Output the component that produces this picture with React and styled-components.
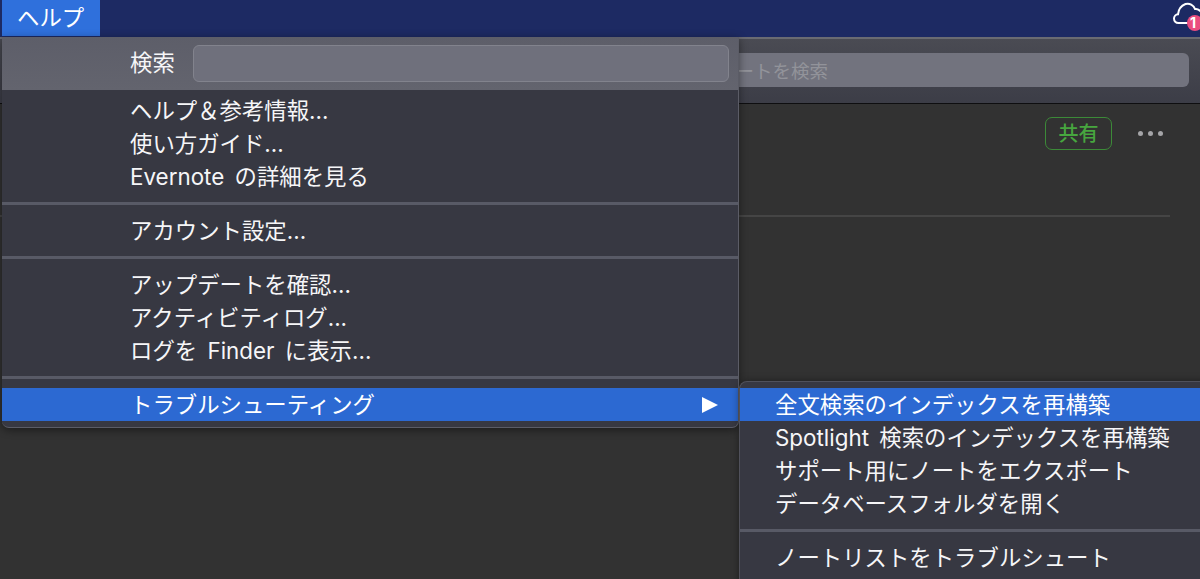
import styled, { createGlobalStyle } from "styled-components";

const GlobalStyle = createGlobalStyle`
  html, body {
    margin: 0;
    padding: 0;
    background: #323232;
  }
  * {
    box-sizing: border-box;
  }
`;

const Page = styled.div`
  position: relative;
  width: 1200px;
  height: 579px;
  overflow: hidden;
  display: flex;
  flex-direction: column;
  background: #323232;
  color: #f6f6f8;
  font-family: Inter, "Noto Sans CJK JP", sans-serif;
  font-size: 22.4px;
  word-spacing: 4px;
`;

const MenuBar = styled.div`
  height: 37px;
  flex: none;
  display: flex;
  align-items: flex-start;
  justify-content: space-between;
  padding-left: 2px;
  background: #1d2a63;
`;

const MenuTitle = styled.div`
  width: 98px;
  height: 36px;
  display: flex;
  align-items: center;
  padding: 0 0 4px 15px;
  background: #2f70dc;
  color: #fff;
`;

const CloudWrap = styled.div`
  position: relative;
  width: 28px;
  height: 32px;
`;

const Badge = styled.span`
  position: absolute;
  left: 15px;
  top: 15px;
  width: 16px;
  height: 16px;
  border-radius: 50%;
  background: #ea4c7f;
  color: #fff;
  font-size: 14px;
  font-weight: 700;
  line-height: 16px;
  padding-left: 3px;
`;

const Toolbar = styled.div`
  height: 67px;
  flex: none;
  display: flex;
  justify-content: flex-end;
  align-items: flex-start;
  padding: 14px 11px 0 0;
  background: linear-gradient(#4a4b53, #3c3d47);
  border-top: 2px solid #6a6b72;
  border-bottom: 1px solid #0e0e10;
`;

const NoteSearch = styled.div`
  width: 500px;
  height: 34px;
  display: flex;
  align-items: center;
  padding: 0 0 1px 28px;
  border-radius: 6px;
  background: #72737e;
  color: #92939a;
  font-size: 18.5px;
`;

const Content = styled.div`
  flex: 1;
  padding: 13px 30px 0 0;
`;

const ActionRow = styled.div`
  display: flex;
  justify-content: flex-end;
  align-items: center;
  gap: 26px;
  padding-right: 7px;
`;

const ShareButton = styled.div`
  width: 67px;
  height: 33px;
  display: flex;
  align-items: center;
  justify-content: center;
  padding-bottom: 3px;
  border: 1px solid #3c8a38;
  border-radius: 7px;
  color: #47a63f;
  font-size: 20px;
  font-weight: 500;
`;

const Dots = styled.div`
  display: flex;
  gap: 5px;
`;

const Dot = styled.span`
  width: 5px;
  height: 5px;
  border-radius: 50%;
  background: #a5a5a8;
`;

const Rule = styled.div`
  height: 2px;
  margin-top: 65px;
  background: #454545;
`;

const Menu = styled.div`
  position: absolute;
  left: 2px;
  top: 37px;
  width: 737px;
  padding-bottom: 6px;
  background: #373842;
  border-right: 1px solid #5b5c66;
  border-bottom: 1px solid #5b5c66;
  border-radius: 0 0 7px 7px;
  box-shadow: 0 2px 8px rgba(0, 0, 0, 0.45);
`;

const SearchHeader = styled.div`
  height: 53px;
  margin-bottom: 4px;
  display: flex;
  align-items: center;
  gap: 18px;
  padding: 0 9px 0 128px;
  background: linear-gradient(#5d5e69, #63646e);
`;

const SearchLabel = styled.span`
  margin-top: -5px;
`;

const SearchInput = styled.div`
  flex: 1;
  height: 37px;
  margin-top: -1px;
  background: #6f707c;
  border: 1px solid #82838d;
  border-radius: 6px;
`;

const Item = styled.div`
  height: 33px;
  display: flex;
  align-items: center;
  justify-content: space-between;
  padding: 0 20px 4px ${(p) => p.$indent}px;
  white-space: nowrap;
  background: ${(p) => (p.$active ? "#2c69d2" : "transparent")};
  color: ${(p) => (p.$active ? "#fff" : "inherit")};
`;

const Arrow = styled.span`
  width: 0;
  height: 0;
  margin-top: 4px;
  border-left: 16px solid #fff;
  border-top: 8px solid transparent;
  border-bottom: 8px solid transparent;
`;

const Separator = styled.div`
  height: 21px;
  display: flex;
  align-items: center;

  &::after {
    content: "";
    width: 100%;
    height: 3px;
    background: #585a66;
  }
`;

const SubMenu = styled.div`
  position: absolute;
  left: 740px;
  top: 382px;
  width: 470px;
  height: 210px;
  padding-top: 6px;
  background: #373842;
  border-radius: 7px 0 0 7px;
  box-shadow: 0 0 0 1px #50515b, 0 0 8px rgba(0, 0, 0, 0.5);
`;

export default function App() {
  return (
    <Page>
      <GlobalStyle />
      <MenuBar>
        <MenuTitle>ヘルプ</MenuTitle>
        <CloudWrap>
          <svg width="28" height="26" viewBox="0 0 28 26" fill="none">
            <path
              d="M18 23H6.5C3.8 23 2 21 2 18.6C2 16.2 3.8 14.4 6 14.3C6.5 9.5 9.6 5.5 13.5 4C17.5 2.8 21.5 5 23 9C24.5 8.8 27 9.5 28 11"
              stroke="#fff"
              strokeWidth="2"
              strokeLinecap="round"
            />
          </svg>
          <Badge>1</Badge>
        </CloudWrap>
      </MenuBar>
      <Toolbar>
        <NoteSearch>ノートを検索</NoteSearch>
      </Toolbar>
      <Content>
        <ActionRow>
          <ShareButton>共有</ShareButton>
          <Dots>
            <Dot />
            <Dot />
            <Dot />
          </Dots>
        </ActionRow>
        <Rule />
      </Content>

      <Menu>
        <SearchHeader>
          <SearchLabel>検索</SearchLabel>
          <SearchInput />
        </SearchHeader>
        <Item $indent={128}>ヘルプ＆参考情報...</Item>
        <Item $indent={128}>使い方ガイド...</Item>
        <Item $indent={128}>Evernote の詳細を見る</Item>
        <Separator />
        <Item $indent={128}>アカウント設定...</Item>
        <Separator />
        <Item $indent={128}>アップデートを確認...</Item>
        <Item $indent={128}>アクティビティログ...</Item>
        <Item $indent={128}>ログを Finder に表示...</Item>
        <Separator />
        <Item $indent={128} $active>
          トラブルシューティング
          <Arrow />
        </Item>
      </Menu>

      <SubMenu>
        <Item $indent={35} $active>
          全文検索のインデックスを再構築
        </Item>
        <Item $indent={35}>Spotlight 検索のインデックスを再構築</Item>
        <Item $indent={35}>サポート用にノートをエクスポート</Item>
        <Item $indent={35}>データベースフォルダを開く</Item>
        <Separator />
        <Item $indent={35}>ノートリストをトラブルシュート</Item>
      </SubMenu>
    </Page>
  );
}
